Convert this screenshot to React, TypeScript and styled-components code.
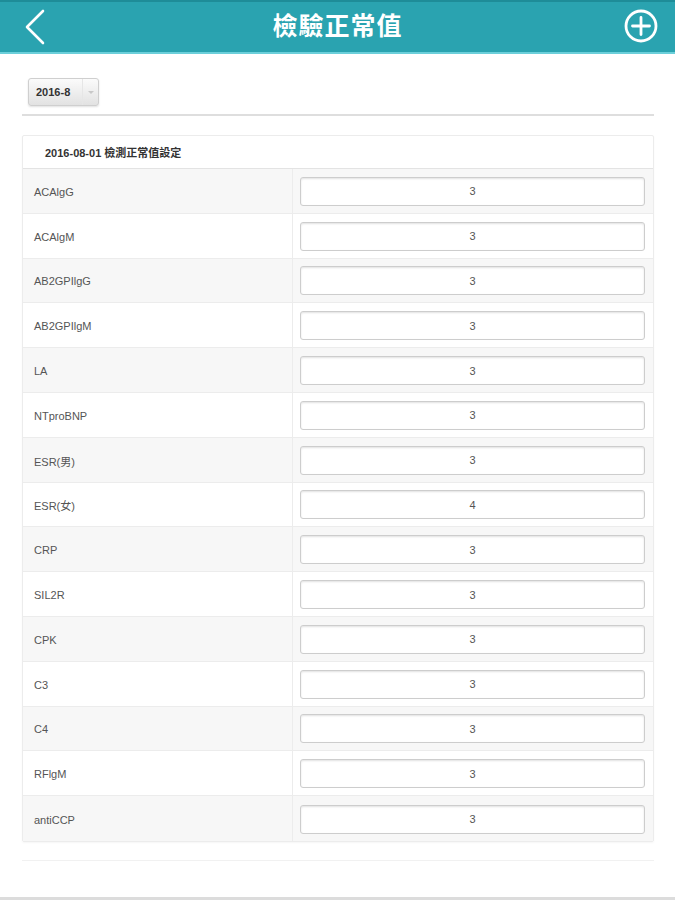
import React from "react";
import styled, { createGlobalStyle } from "styled-components";

const GlobalStyle = createGlobalStyle`
  html, body { margin: 0; padding: 0; background: #ffffff; }
  body { font-family: "Liberation Sans", Arial, "Noto Sans CJK TC", sans-serif; }
  * { box-sizing: border-box; }
`;

const Page = styled.div`
  width: 675px;
  height: 900px;
  display: flex;
  flex-direction: column;
  background: #fff;
  border-bottom: 3px solid #dcdcdc;
  overflow: hidden;
`;

const Header = styled.header`
  height: 54px;
  flex: none;
  background: #2aa3b0;
  border-top: 2px solid #1e8c98;
  border-bottom: 2px solid #6ccfda;
  display: grid;
  grid-template-columns: 60px 1fr 60px;
  align-items: center;
`;

const Title = styled.h1`
  margin: 0;
  padding-bottom: 6px;
  line-height: 1;
  text-align: center;
  color: #fff;
  font-size: 25px;
  font-weight: bold;
  font-family: "Noto Sans CJK TC", sans-serif;
  letter-spacing: 1px;
`;

const IconButton = styled.button<{ $side: "left" | "right" }>`
  border: 0;
  background: transparent;
  padding: 0;
  display: flex;
  justify-content: ${(p) => (p.$side === "left" ? "flex-start" : "flex-end")};
  padding-left: ${(p) => (p.$side === "left" ? "24px" : "0")};
  padding-right: ${(p) => (p.$side === "right" ? "17px" : "0")};
  padding-bottom: ${(p) => (p.$side === "right" ? "2px" : "0")};
  color: #fff;
`;

const Content = styled.main`
  padding: 24px 21px 0 22px;
  display: flex;
  flex-direction: column;
`;

const Toolbar = styled.div`
  padding: 0 0 8px 6px;
  border-bottom: 2px solid #dedede;
  margin-bottom: 19px;
`;

const Select = styled.div`
  width: 71px;
  height: 28px;
  border: 1px solid #cfcfcf;
  border-radius: 3px;
  background: linear-gradient(#fbfbfb, #e2e2e2);
  box-shadow: 0 1px 2px rgba(0, 0, 0, 0.12);
  display: flex;
  align-items: center;
  font-size: 11px;
  font-weight: bold;
  color: #333;
`;

const SelectText = styled.span`
  flex: 1;
  padding-left: 7px;
`;

const SelectArrow = styled.span`
  width: 16px;
  height: 100%;
  border-left: 1px solid #e6e6e6;
  display: flex;
  align-items: center;
  justify-content: center;
  &::after {
    content: "";
    border-left: 3px solid transparent;
    border-right: 3px solid transparent;
    border-top: 3px solid #c8c8c8;
  }
`;

const Card = styled.section`
  border: 1px solid #ececec;
  border-radius: 2px;
  box-shadow: 0 1px 2px rgba(0, 0, 0, 0.04);
`;

const CardHeader = styled.div`
  height: 33px;
  display: flex;
  align-items: center;
  padding-left: 22px;
  font-size: 11px;
  font-weight: bold;
  color: #333;
  border-bottom: 1px solid #e3e3e3;
`;

const Row = styled.div<{ $odd: boolean }>`
  height: 44.8px;
  display: grid;
  grid-template-columns: 270px 1fr;
  background: ${(p) => (p.$odd ? "#f7f7f7" : "#ffffff")};
  border-bottom: 1px solid #ececec;
  &:last-child { border-bottom: 0; }
`;

const Label = styled.div`
  display: flex;
  align-items: center;
  padding-left: 11px;
  padding-top: 2px;
  font-size: 11px;
  color: #555;
  border-right: 1px solid #ececec;
`;

const Cell = styled.div`
  display: flex;
  align-items: center;
  padding: 1px 8px 0 7px;
`;

const Input = styled.div`
  width: 100%;
  height: 29px;
  border: 1px solid #cdcdcd;
  border-radius: 3px;
  background: #fff;
  box-shadow: inset 0 1px 2px rgba(0, 0, 0, 0.12);
  display: flex;
  align-items: center;
  justify-content: center;
  font-size: 11px;
  color: #555;
`;

const Footer = styled.div`
  height: 19px;
  border-bottom: 1px solid #f1f1f1;
`;

const rows: [string, string][] = [
  ["ACAlgG", "3"],
  ["ACAlgM", "3"],
  ["AB2GPIlgG", "3"],
  ["AB2GPIlgM", "3"],
  ["LA", "3"],
  ["NTproBNP", "3"],
  ["ESR(男)", "3"],
  ["ESR(女)", "4"],
  ["CRP", "3"],
  ["SIL2R", "3"],
  ["CPK", "3"],
  ["C3", "3"],
  ["C4", "3"],
  ["RFlgM", "3"],
  ["antiCCP", "3"],
];

export default function App() {
  return (
    <>
      <GlobalStyle />
      <Page>
        <Header>
          <IconButton $side="left" aria-label="back">
            <svg width="22" height="36" viewBox="0 0 22 36">
              <path d="M19 2 L3 18 L19 34" fill="none" stroke="#fff" strokeWidth="2.6" strokeLinecap="round" strokeLinejoin="round" />
            </svg>
          </IconButton>
          <Title>檢驗正常值</Title>
          <IconButton $side="right" aria-label="add">
            <svg width="34" height="34" viewBox="0 0 34 34">
              <circle cx="17" cy="17" r="15" fill="none" stroke="#fff" strokeWidth="2.8" />
              <path d="M17 8.5 V25.5 M8.5 17 H25.5" stroke="#fff" strokeWidth="2.8" strokeLinecap="round" />
            </svg>
          </IconButton>
        </Header>
        <Content>
          <Toolbar>
            <Select>
              <SelectText>2016-8</SelectText>
              <SelectArrow />
            </Select>
          </Toolbar>
          <Card>
            <CardHeader>2016-08-01 檢測正常值設定</CardHeader>
            {rows.map(([name, value], i) => (
              <Row key={name} $odd={i % 2 === 0}>
                <Label>{name}</Label>
                <Cell>
                  <Input>{value}</Input>
                </Cell>
              </Row>
            ))}
          </Card>
          <Footer />
        </Content>
      </Page>
    </>
  );
}
